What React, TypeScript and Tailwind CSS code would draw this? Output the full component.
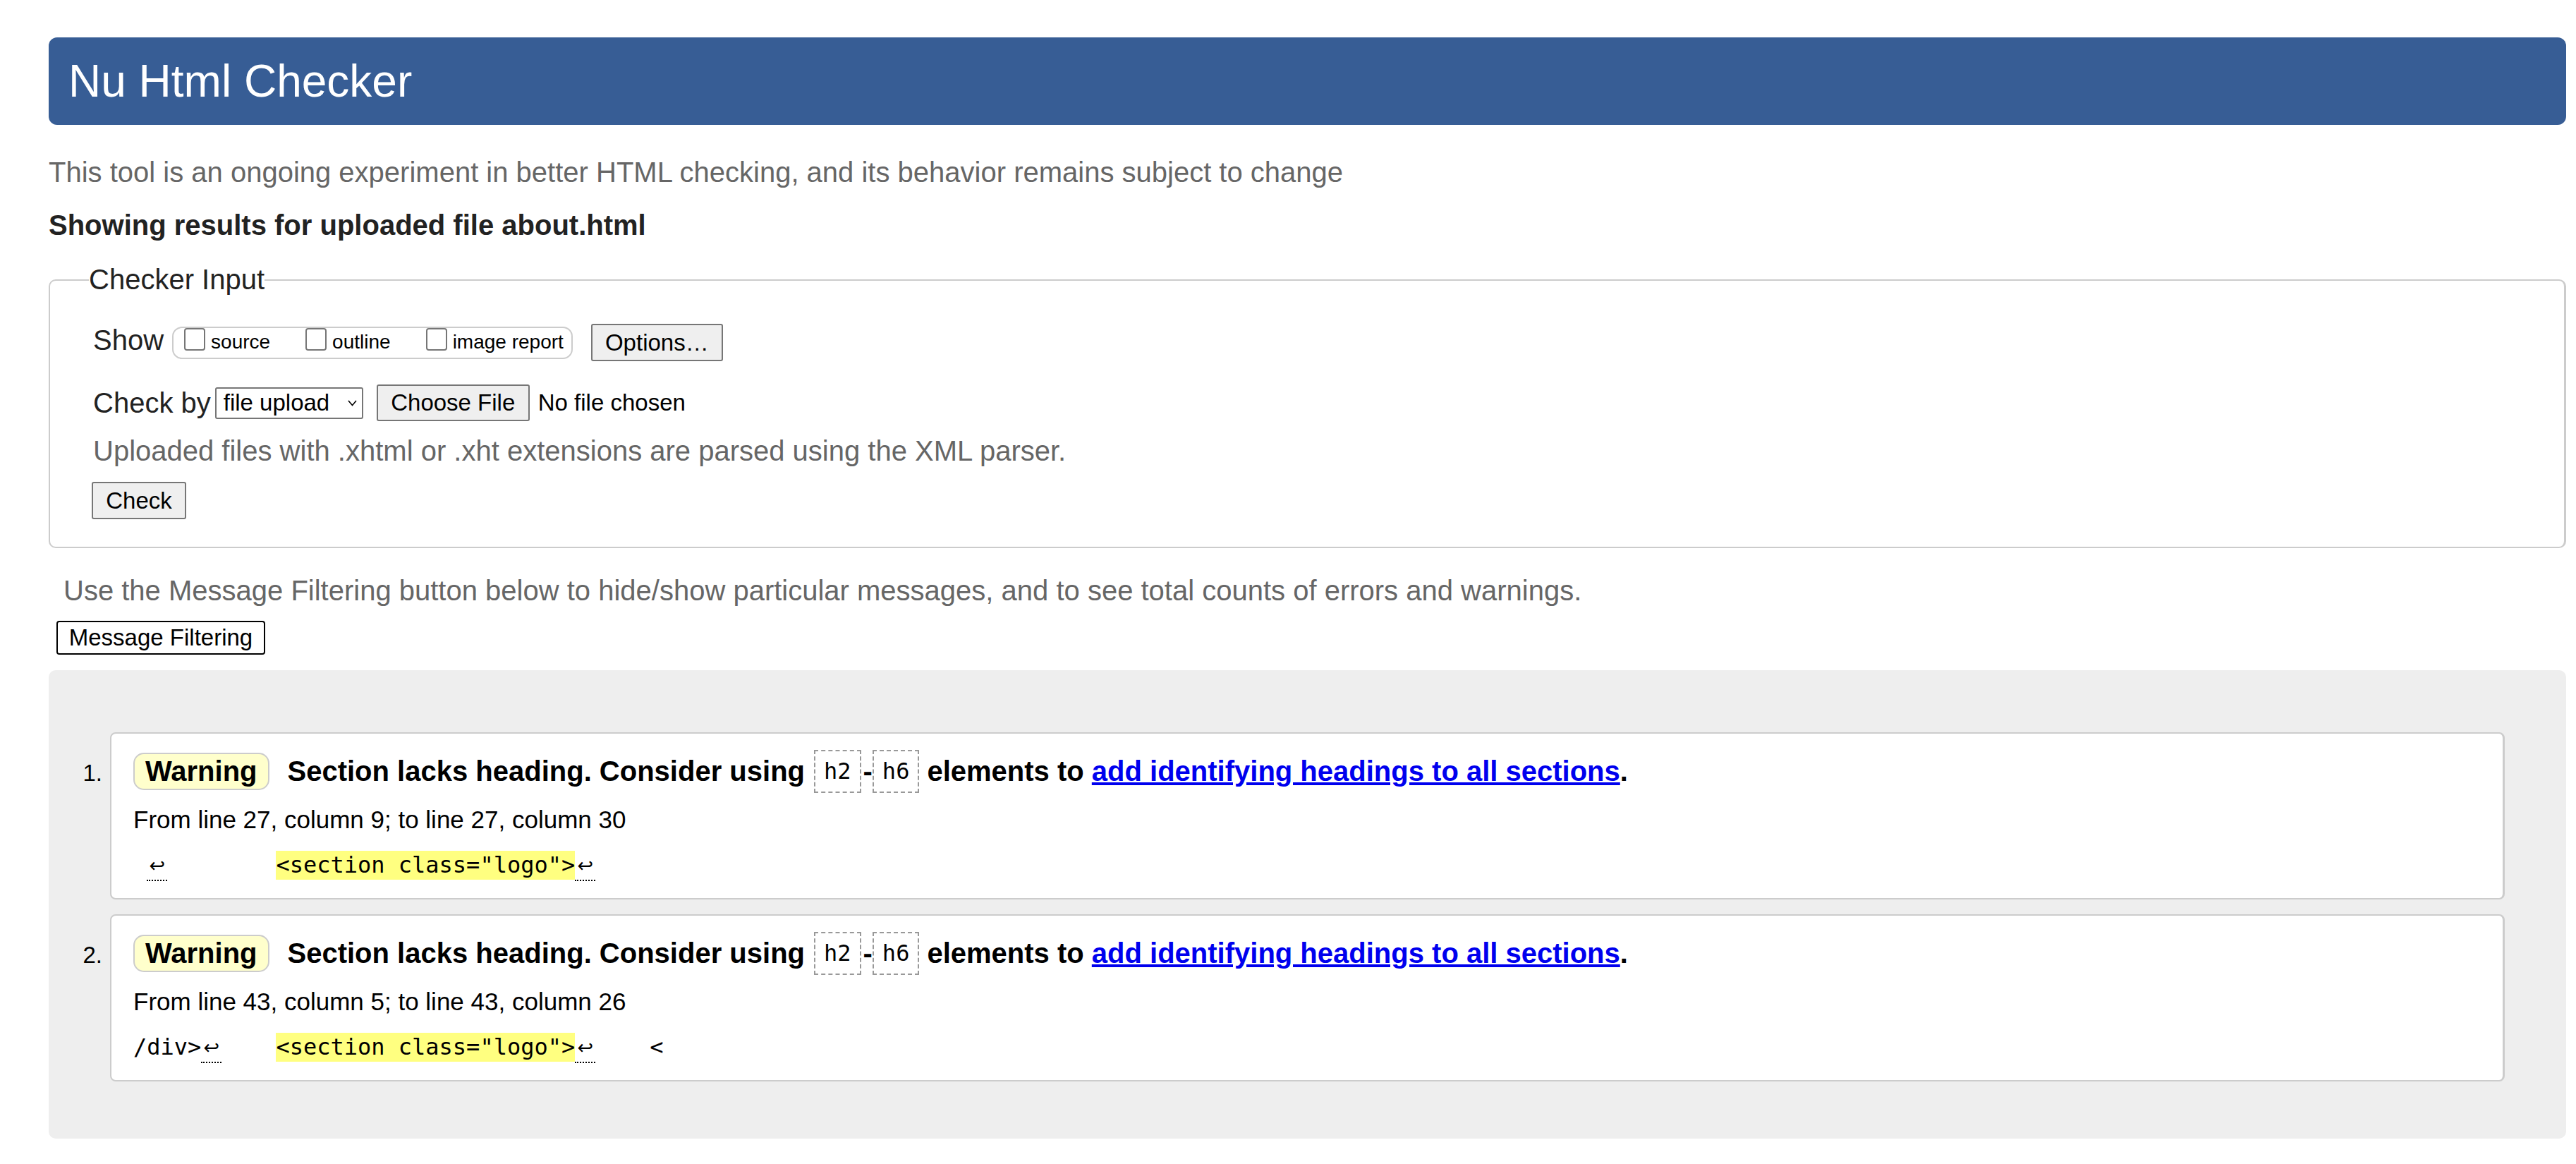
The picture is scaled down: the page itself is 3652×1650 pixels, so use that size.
import React from 'react';

const sans = { fontFamily: '"Liberation Sans", Arial, sans-serif' };

function Checkbox({ label }: { label: string }) {
  return (
    <span className="flex items-end h-[34px]">
      <span className="mb-[2px] inline-block w-[30px] h-[32px] rounded-[4px] border-2 border-[#767676] bg-white" />
      <span className="ml-[8px] text-[28px] leading-[28px] text-black">{label}</span>
    </span>
  );
}

function Btn({ children, className = '' }: { children: React.ReactNode; className?: string }) {
  return (
    <span
      className={`flex items-center justify-center rounded-[3px] border-2 border-[#767676] bg-[#efefef] text-[33px] text-black ${className}`}
    >
      {children}
    </span>
  );
}

function Ret({ className = '' }: { className?: string }) {
  return (
    <span
      className={`inline-block w-[29px] h-[43px] border-b-2 border-dotted border-black text-center text-[27px] leading-[41px] ${className}`}
      style={{ fontFamily: '"DejaVu Sans", sans-serif' }}
    >
      ↩
    </span>
  );
}

function Code({ children }: { children: React.ReactNode }) {
  return (
    <span
      className="inline-flex items-center h-[61px] px-[12px] border-2 border-dashed border-[#999] text-[32px] font-normal text-black"
      style={{ fontFamily: '"DejaVu Sans Mono", monospace' }}
    >
      {children}
    </span>
  );
}

interface Msg {
  from: string;
  line: React.ReactNode;
}

function Message({ n, msg, first }: { n: number; msg: Msg; first?: boolean }) {
  return (
    <li className={`flex ${first ? '' : 'mt-[21px]'}`}>
      <span className="w-[87px] shrink-0 pr-[11px] text-right text-[33px] leading-[45px] mt-[35px]">{n}.</span>
      <div className="flex-1 rounded-[8px] border-2 border-r-[3px] border-[#ccc] bg-white pl-[31px] pt-[23px] pb-[26px]">
        <div className="flex items-center h-[61px] text-[40px] leading-[45px] font-bold text-black whitespace-nowrap">
          <span className="flex items-center h-[53px] px-[15px] rounded-[15px] border-2 border-[#ccc] bg-[#ffffcc]">
            Warning
          </span>
          <span className="ml-[26px]">Section lacks heading. Consider using</span>
          <span className="ml-[13px]">
            <Code>h2</Code>
          </span>
          <span className="ml-[3px]">-</span>
          <Code>h6</Code>
          <span className="ml-[11px]">
            elements to{' '}
            <a href="#" className="text-[#0000ee] underline">
              add identifying headings to all sections
            </a>
            .
          </span>
        </div>
        <p className="mt-[18px] text-[35px] leading-[40px] text-black">{msg.from}</p>
        <div
          className="mt-[24px] flex items-start h-[41px] whitespace-pre text-[32px] leading-[41px] text-black"
          style={{ fontFamily: '"DejaVu Sans Mono", monospace' }}
        >
          {msg.line}
        </div>
      </div>
    </li>
  );
}

export default function App() {
  const hl = <span className="inline-block h-[41px] bg-[#ffff80]">{'<section class="logo">'}</span>;

  const messages: Msg[] = [
    {
      from: 'From line 27, column 9; to line 27, column 30',
      line: (
        <>
          <span>{' '}</span>
          <Ret />
          <span>{'        '}</span>
          {hl}
          <Ret />
        </>
      ),
    },
    {
      from: 'From line 43, column 5; to line 43, column 26',
      line: (
        <>
          <span>/div&gt;</span>
          <Ret />
          <span>{'    '}</span>
          {hl}
          <Ret />
          <span>{'    <'}</span>
        </>
      ),
    },
  ];

  return (
    <div className="w-[3652px] h-[1650px] overflow-hidden bg-white" style={sans}>
      <div className="ml-[69px] w-[3569px] pt-[53px]">
        {/* Header */}
        <h1 className="flex items-center h-[124px] rounded-[12px] bg-[#375d95] pl-[28px] text-[64px] leading-none font-normal text-white">
          Nu Html Checker
        </h1>

        <p className="mt-[45px] text-[40px] leading-[45px] text-[#666]">
          This tool is an ongoing experiment in better HTML checking, and its behavior remains subject to change
        </p>
        <p className="mt-[30px] text-[40px] leading-[45px] font-bold text-[#222]">
          Showing results for uploaded file about.html
        </p>

        {/* Checker input */}
        <fieldset className="mt-[32px] rounded-[10px] border-2 border-r-[3px] border-[#ccc] pl-[61px] pt-[40px] pb-[39px]">
          <legend className="ml-[-6px] text-[40px] leading-[45px] text-[#222]">Checker Input</legend>

          <div className="flex items-center h-[53px]">
            <span className="mb-[6px] text-[40px] leading-[45px] text-[#222]">Show</span>
            <div className="ml-[12px] flex items-start h-[46px] rounded-[14px] border-2 border-[#ccc] pl-[15px] pr-[11px] gap-[50px]">
              <Checkbox label="source" />
              <Checkbox label="outline" />
              <Checkbox label="image report" />
            </div>
            <Btn className="ml-[26px] h-[53px] w-[187px]">Options…</Btn>
          </div>

          <div className="mt-[33px] flex items-center h-[52px]">
            <span className="text-[40px] leading-[45px] text-[#222]">Check by</span>
            <span className="ml-[6px] flex items-center h-[45px] w-[210px] rounded-[3px] border-2 border-[#767676] bg-white pl-[10px] text-[33px] text-black">
              file upload
              <svg className="ml-[26px]" width="13" height="9" viewBox="0 0 13 9" fill="none">
                <polyline points="1,1 6.5,7.5 12,1" stroke="#000" strokeWidth="1.6" />
              </svg>
            </span>
            <Btn className="ml-[19px] h-[52px] w-[217px]">Choose File</Btn>
            <span className="ml-[12px] text-[33px] text-black">No file chosen</span>
          </div>

          <p className="mt-[20px] text-[40px] leading-[45px] text-[#666]">
            Uploaded files with .xhtml or .xht extensions are parsed using the XML parser.
          </p>

          <Btn className="mt-[21px] ml-[-2px] h-[53px] w-[134px]">Check</Btn>
        </fieldset>

        <p className="mt-[38px] ml-[21px] text-[40px] leading-[45px] text-[#666]">
          Use the Message Filtering button below to hide/show particular messages, and to see total counts of errors and
          warnings.
        </p>
        <span className="mt-[20px] ml-[11px] flex items-center justify-center h-[48px] w-[296px] rounded-[4px] border-2 border-black bg-white text-[33px] text-black">
          Message Filtering
        </span>

        {/* Results */}
        <div className="mt-[22px] rounded-[10px] bg-[#eee] pt-[88px] pb-[81px] pr-[87px]">
          <ol className="text-black">
            {messages.map((m, i) => (
              <Message key={i} n={i + 1} msg={m} first={i === 0} />
            ))}
          </ol>
        </div>
      </div>
    </div>
  );
}
